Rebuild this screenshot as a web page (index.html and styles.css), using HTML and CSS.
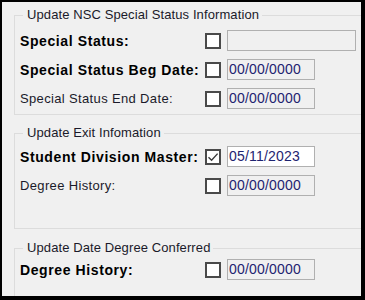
FILE: index.html
```html
<!DOCTYPE html>
<html>
<head>
<meta charset="utf-8">
<link rel="stylesheet" href="styles.css">
</head>
<body>
<div class="frame">
  <fieldset class="group group-nsc">
    <legend class="group-title">Update NSC Special Status Information</legend>
    <div class="rows">
      <div class="row">
        <span class="label bold">Special Status:</span>
        <span class="check"></span>
        <span class="field wide"></span>
      </div>
      <div class="row">
        <span class="label bold">Special Status Beg Date:</span>
        <span class="check"></span>
        <span class="field">00/00/0000</span>
      </div>
      <div class="row">
        <span class="label">Special Status End Date:</span>
        <span class="check"></span>
        <span class="field">00/00/0000</span>
      </div>
    </div>
  </fieldset>
  <fieldset class="group group-exit">
    <legend class="group-title">Update Exit Infomation</legend>
    <div class="rows">
      <div class="row">
        <span class="label bold">Student Division Master:</span>
        <span class="check checked"><svg viewBox="0 0 12 12" width="12" height="12"><path d="M1.5 6.2 L4.6 9.2 L10.6 2.6" fill="none" stroke="#3a3a3a" stroke-width="1.4"/></svg></span>
        <span class="field editable">05/11/2023</span>
      </div>
      <div class="row">
        <span class="label">Degree History:</span>
        <span class="check"></span>
        <span class="field">00/00/0000</span>
      </div>
    </div>
  </fieldset>
  <fieldset class="group group-conferred">
    <legend class="group-title">Update Date Degree Conferred</legend>
    <div class="rows">
      <div class="row">
        <span class="label bold">Degree History:</span>
        <span class="check"></span>
        <span class="field">00/00/0000</span>
      </div>
    </div>
  </fieldset>
</div>
</body>
</html>
```
FILE: styles.css
```css
* { box-sizing: border-box; }
html, body { margin: 0; padding: 0; }
body {
  font-family: "Liberation Sans", Arial, sans-serif;
  font-size: 13px;
  color: #000;
  background: #000;
}
.frame {
  width: 365px;
  height: 300px;
  border-style: solid;
  border-color: #000;
  border-width: 2px 4px 4px 2px;
  background: #f0f0f0;
  overflow: hidden;
}
.group {
  margin: 0 0 0 12px;
  width: 400px;
  border: 1px solid #dcdcdc;
  padding: 6px 0 0 5px;
  min-width: 0;
}
.group-title {
  margin-left: 3px;
  padding: 0 3px 0 4px;
  font-size: 13px;
  line-height: 16px;
  letter-spacing: 0.1px;
  color: #1a1a2a;
}
.group-nsc { margin-top: 5px; padding-top: 7px; padding-bottom: 5px; }
.group-exit { margin-top: 10px; padding-top: 5px; padding-bottom: 32px; }
.group-conferred { margin-top: 11px; padding-top: 3px; height: 80px; }
.rows {
  display: flex;
  flex-direction: column;
  gap: 8px;
}
.row {
  display: grid;
  grid-template-columns: 179px 16px auto;
  column-gap: 6px;
  align-items: center;
  height: 21px;
}
.label {
  font-size: 13px;
  letter-spacing: 0.35px;
  color: #1a1a2a;
  white-space: nowrap;
}
.label.bold {
  font-weight: bold;
  font-size: 14px;
  letter-spacing: 0.6px;
  color: #000;
}
.check {
  width: 16px;
  height: 16px;
  border: 2px solid #4a4a4a;
  background: #fff;
  display: flex;
  align-items: center;
  justify-content: center;
}
.field {
  width: 88px;
  height: 21px;
  border: 1px solid #b0b0b0;
  background: #f0f0f0;
  padding: 0 0 0 1px;
  line-height: 19px;
  font-size: 14px;
  letter-spacing: 0.2px;
  color: #1e2470;
}
.field.wide { width: 129px; }
.field.editable { background: #fff; }
```
